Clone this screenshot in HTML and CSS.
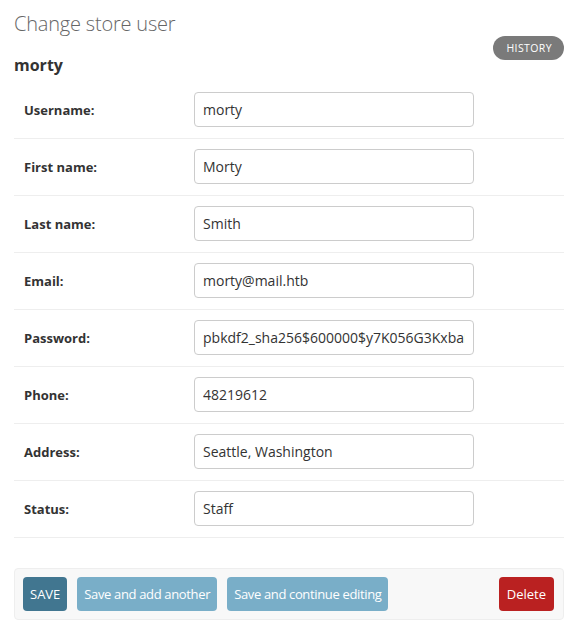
FILE: index.html
```html
<!DOCTYPE html>
<html lang="en">
<head>
<meta charset="utf-8">
<title>Change store user</title>
<link rel="stylesheet" href="styles.css">
</head>
<body>
<div class="content">
  <h1 class="title">Change store user</h1>
  <div class="subhead">
    <h2 class="object-name">morty</h2>
    <a class="history" href="#">History</a>
  </div>
  <form class="change-form">
    <fieldset class="module">
      <div class="form-row"><label class="label">Username:</label><input class="field" type="text" value="morty"></div>
      <div class="form-row"><label class="label">First name:</label><input class="field" type="text" value="Morty"></div>
      <div class="form-row"><label class="label">Last name:</label><input class="field" type="text" value="Smith"></div>
      <div class="form-row"><label class="label">Email:</label><input class="field" type="text" value="morty@mail.htb"></div>
      <div class="form-row"><label class="label">Password:</label><input class="field" type="text" value="pbkdf2_sha256$600000$y7K056G3KxbaRwLpGwq4d"></div>
      <div class="form-row"><label class="label">Phone:</label><input class="field" type="text" value="48219612"></div>
      <div class="form-row"><label class="label">Address:</label><input class="field" type="text" value="Seattle, Washington"></div>
      <div class="form-row"><label class="label">Status:</label><input class="field" type="text" value="Staff"></div>
    </fieldset>
    <div class="submit-row">
      <button class="btn btn-default" type="button">SAVE</button>
      <button class="btn" type="button">Save and add another</button>
      <button class="btn" type="button">Save and continue editing</button>
      <span class="spacer"></span>
      <button class="btn btn-delete" type="button">Delete</button>
    </div>
  </form>
</div>
</body>
</html>
```
FILE: styles.css
```css
* { box-sizing: border-box; }
html, body { margin: 0; padding: 0; background: #fff; }
body {
  font-family: "Open Sans", "Noto Sans", sans-serif;
  color: #333;
  font-size: 14px;
}
.content { padding: 0 11px 0 14px; }
.title {
  margin: 0;
  padding-top: 10px;
  font-size: 20px;
  line-height: 28px;
  font-weight: 300;
  color: #666;
  letter-spacing: -0.2px;
}
.subhead {
  display: flex;
  justify-content: space-between;
  align-items: flex-start;
  margin-top: -2px;
}
.object-name {
  margin: 20px 0 0 0;
  font-size: 16px;
  line-height: 18px;
  font-weight: 700;
  color: #333;
}
.history {
  display: block;
  height: 24px;
  line-height: 24px;
  padding: 0 12px 0 13px;
  border-radius: 12px;
  background: #7a7a7a;
  color: #fff;
  text-decoration: none;
  text-transform: uppercase;
  font-size: 10.5px;
  letter-spacing: 0.4px;
}
.change-form { margin: 8px 0 0 0; }
.module { border: 0; margin: 0; padding: 0; min-width: 0; }
.form-row {
  display: flex;
  align-items: center;
  padding: 10px 10px 11px;
  border-bottom: 1px solid #eee;
}
.label {
  width: 170px;
  flex: none;
  font-weight: 700;
  font-size: 13px;
  color: #333;
}
.field {
  width: 280px;
  height: 35px;
  padding: 0 8px;
  border: 1px solid #ccc;
  border-radius: 4px;
  font-family: inherit;
  font-size: 14px;
  color: #333;
  background: #fff;
}
.submit-row {
  display: flex;
  align-items: center;
  gap: 10px;
  margin-top: 30px;
  padding: 8px 9px 8px 8px;
  background: #f8f8f8;
  border: 1px solid #eee;
  border-radius: 4px;
}
.spacer { flex: 1; }
.btn {
  height: 34px;
  padding: 0 7px;
  border: 0;
  border-radius: 4px;
  background: #79aec8;
  color: #fff;
  font-family: inherit;
  font-size: 13px;
  letter-spacing: -0.35px;
  cursor: pointer;
}
.btn-default { background: #417690; letter-spacing: 0; }
.btn-delete { background: #ba2121; padding: 0 8px; letter-spacing: 0; }
```
